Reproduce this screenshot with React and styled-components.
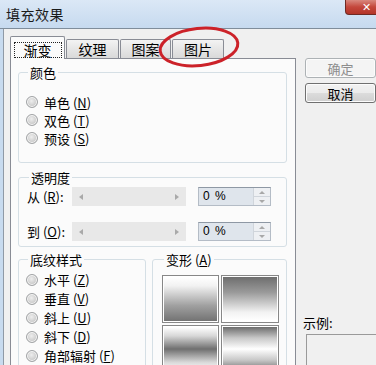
import React from 'react';
import styled, { createGlobalStyle } from 'styled-components';

const GlobalStyle = createGlobalStyle`
	html, body {
		margin: 0;
		padding: 0;
		background: #f0f0f0;
		overflow: hidden;
	}
`;

const Window = styled.div`
	position: relative;
	width: 388px;
	height: 365px;
	overflow: hidden;
	background: #f0f0f0;
	font-family: 'Noto Sans CJK SC', 'Noto Sans', sans-serif;
	font-size: 13px;
	color: #000;
`;

const TitleBar = styled.div`
	height: 28px;
	display: flex;
	align-items: center;
	padding-left: 6px;
	background: linear-gradient(#dbe8f6, #c6daef);
	border-bottom: 1px solid #7f8d9b;
	box-sizing: content-box;

	.title {
		font-size: 14px;
		letter-spacing: 0.5px;
		color: #1b1b1b;
	}
`;

const CloseButton = styled.div`
	margin-left: auto;
	align-self: flex-start;
	width: 43px;
	height: 15px;
	display: flex;
	align-items: center;
	justify-content: center;
	background: linear-gradient(#d9887e, #c4473c 50%, #b33428);
	border: 1px solid #6e2a24;
	border-top: none;
	border-radius: 0 0 4px 4px;
	box-sizing: border-box;
	color: #fff;
	font-family: 'DejaVu Sans', sans-serif;
	font-weight: bold;
	font-size: 11px;
	line-height: 1;
`;

const Body = styled.div`
	display: flex;
	align-items: flex-start;
	height: 336px;
	padding-left: 7px;
	border-left: 3px solid #c8dbef;
	box-shadow: inset 1px 0 #8f9aa6;
`;

const TabArea = styled.div`
	width: 286px;
	margin-top: 7px;
	display: flex;
	flex-direction: column;
`;

const TabRow = styled.div`
	display: flex;
	align-items: flex-end;
	height: 22px;
`;

const Tab = styled.div`
	position: relative;
	width: ${(p) => p.$w}px;
	height: ${(p) => (p.$active ? 23 : 19)}px;
	margin-bottom: ${(p) => (p.$active ? -1 : 0)}px;
	z-index: ${(p) => (p.$active ? 1 : 0)};
	box-sizing: border-box;
	border: 1px solid #898c95;
	border-bottom: none;
	border-radius: 2px 2px 0 0;
	background: ${(p) => (p.$active ? '#fbfbfb' : 'linear-gradient(#f3f3f3, #e6e6e6 50%, #d9d9d9)')};
	display: flex;
	align-items: center;
	justify-content: center;
	padding-top: ${(p) => (p.$active ? 3 : 0)}px;
	font-size: 14px;
	line-height: 16px;

	& + & {
		margin-left: 1px;
	}
`;

const Focus = styled.span`
	border: 1px dotted #222;
	padding: 0 9px;
	line-height: 14px;
`;

const Panel = styled.div`
	height: 320px;
	box-sizing: border-box;
	border: 1px solid #898c95;
	background: #fbfbfb;
	padding: 0 8px 0 7px;
	overflow: hidden;
`;

const Group = styled.fieldset`
	margin: ${(p) => p.$top}px 0 0;
	padding: ${(p) => p.$pad};
	width: ${(p) => (p.$w ? `${p.$w}px` : 'auto')};
	box-sizing: border-box;
	border: 1px solid #d5dfe5;
	border-radius: 3px;
	min-width: 0;

	legend {
		padding: 0 2px;
		margin-left: 2px;
		font-size: 13px;
		line-height: 15px;
	}
`;

const RadioRow = styled.div`
	display: flex;
	align-items: center;
	height: ${(p) => p.$h}px;
	gap: 6px;
	white-space: nowrap;

	u {
		text-underline-offset: 1px;
	}
`;

const Radio = styled.span`
	flex: none;
	width: 12px;
	height: 12px;
	box-sizing: border-box;
	border-radius: 50%;
	border: 1px solid #a2a4a6;
	background: radial-gradient(circle at 45% 40%, #eeeeee, #cfcfcf 55%, #b9b9b9);
	box-shadow: inset 0 0 0 1px #f7f7f7;
`;

const SliderRow = styled.div`
	display: flex;
	align-items: center;
	height: 19px;

	& + & {
		margin-top: 16px;
	}

	.label {
		width: 45px;
		white-space: nowrap;
	}
`;

const Slider = styled.div`
	width: 114px;
	height: 19px;
	background: #e8e8e8;
	display: flex;
	align-items: center;
	justify-content: space-between;
	padding: 0 7px;
	box-sizing: border-box;
`;

const Arrow = styled.span`
	width: 0;
	height: 0;
	border-top: 3px solid transparent;
	border-bottom: 3px solid transparent;
	${(p) => (p.$dir === 'left' ? 'border-right: 4px solid #a9a9a9;' : 'border-left: 4px solid #a9a9a9;')}
`;

const Spin = styled.div`
	margin-left: 12px;
	width: 73px;
	height: 19px;
	box-sizing: border-box;
	border: 1px solid #b4bcc6;
	border-top-color: #8e98a4;
	display: flex;
	background: #dfe5ec;

	.value {
		flex: 1;
		padding-left: 4px;
		font-family: 'Liberation Sans', sans-serif;
		font-size: 12px;
		line-height: 17px;
		letter-spacing: 1px;
	}
`;

const SpinButtons = styled.div`
	width: 16px;
	display: flex;
	flex-direction: column;
	background: #eef0f3;
	border-left: 1px solid #d0d5db;

	span {
		flex: 1;
		display: flex;
		align-items: center;
		justify-content: center;
	}

	span + span {
		border-top: 1px solid #d0d5db;
	}
`;

const SpinArrow = styled.i`
	width: 0;
	height: 0;
	border-left: 3px solid transparent;
	border-right: 3px solid transparent;
	${(p) => (p.$up ? 'border-bottom: 3px solid #a8a8a8;' : 'border-top: 3px solid #a8a8a8;')}
`;

const BottomRow = styled.div`
	display: flex;
	gap: 6px;
	align-items: flex-start;
`;

const SwatchGrid = styled.div`
	display: grid;
	grid-template-columns: 57px 58px;
	grid-auto-rows: 48px;
	gap: 2px;
`;

const Swatch = styled.div`
	box-sizing: border-box;
	border: 1px solid #878787;
	padding: 1px;
	background: #fff;

	&::after {
		content: '';
		display: block;
		height: 100%;
		background: ${(p) => p.$bg};
	}
`;

const Side = styled.div`
	margin-left: 9px;
	padding-top: 29px;
	display: flex;
	flex-direction: column;
	align-items: flex-start;
`;

const Button = styled.div`
	width: 71px;
	height: 20px;
	box-sizing: border-box;
	border-radius: 3px;
	display: flex;
	align-items: center;
	justify-content: center;
	font-size: 13px;
	border: 1px solid ${(p) => (p.$disabled ? '#adb2b5' : '#707070')};
	color: ${(p) => (p.$disabled ? '#8d8d8d' : '#000')};
	background: ${(p) => (p.$disabled ? '#f4f4f4' : 'linear-gradient(#f2f2f2, #ebebeb 50%, #dcdcdc 51%, #cfcfcf)')};
	box-shadow: inset 0 0 0 1px #fcfcfc;

	& + & {
		margin-top: 5px;
	}
`;

const SampleLabel = styled.div`
	margin-top: 212px;
	margin-left: -2px;
	line-height: 15px;
`;

const SampleBox = styled.div`
	margin-top: 4px;
	margin-left: 1px;
	width: 69px;
	height: 40px;
	border: 1px solid #9a9a9a;
	background: #f0f0f0;
`;

const Annotation = styled.svg`
	position: absolute;
	left: 150px;
	top: 20px;
	width: 100px;
	height: 56px;
	pointer-events: none;
`;

const colorOptions = [
	['单色', 'N'],
	['双色', 'T'],
	['预设', 'S'],
];

const shadingOptions = [
	['水平', 'Z'],
	['垂直', 'V'],
	['斜上', 'U'],
	['斜下', 'D'],
	['角部辐射', 'F'],
];

const swatches = [
	'linear-gradient(#ffffff, #f2f2f2 20%, #a0a0a0 65%, #737373)',
	'linear-gradient(#6e6e6e, #9a9a9a 35%, #f2f2f2 80%, #ffffff)',
	'linear-gradient(#ffffff, #d8d8d8 20%, #6f6f6f 50%, #d8d8d8 80%, #ffffff)',
	'linear-gradient(#6c6c6c, #c8c8c8 25%, #ffffff 50%, #c8c8c8 75%, #6c6c6c)',
];

function Option({ text, hotkey, h }) {
	return (
		<RadioRow $h={h}>
			<Radio />
			<span>
				{text} (<u>{hotkey}</u>)
			</span>
		</RadioRow>
	);
}

function TransparencyRow({ label, hotkey }) {
	return (
		<SliderRow>
			<span className='label'>
				{label} (<u>{hotkey}</u>):
			</span>
			<Slider>
				<Arrow $dir='left' />
				<Arrow $dir='right' />
			</Slider>
			<Spin>
				<span className='value'>0 %</span>
				<SpinButtons>
					<span>
						<SpinArrow $up />
					</span>
					<span>
						<SpinArrow />
					</span>
				</SpinButtons>
			</Spin>
		</SliderRow>
	);
}

export default function App() {
	return (
		<Window>
			<GlobalStyle />
			<TitleBar>
				<span className='title'>填充效果</span>
				<CloseButton>✕</CloseButton>
			</TitleBar>
			<Body>
				<TabArea>
					<TabRow>
						<Tab $active $w={55}>
							<Focus>渐变</Focus>
						</Tab>
						<Tab $w={53}>纹理</Tab>
						<Tab $w={51}>图案</Tab>
						<Tab $w={52}>图片</Tab>
					</TabRow>
					<Panel>
						<Group $top={6} $pad='13px 7px 15px'>
							<legend>颜色</legend>
							{colorOptions.map(([t, k]) => (
								<Option key={k} text={t} hotkey={k} h={18} />
							))}
						</Group>
						<Group $top={7} $pad='2px 8px 5px'>
							<legend>透明度</legend>
							<TransparencyRow label='从' hotkey='R' />
							<TransparencyRow label='到' hotkey='O' />
						</Group>
						<BottomRow>
							<Group $top={5} $w={128} $pad='3px 7px 20px'>
								<legend>底纹样式</legend>
								{shadingOptions.map(([t, k]) => (
									<Option key={k} text={t} hotkey={k} h={19} />
								))}
							</Group>
							<Group $top={5} $w={135} $pad='8px 9px 20px'>
								<legend>变形 (<u>A</u>)</legend>
								<SwatchGrid>
									{swatches.map((bg, i) => (
										<Swatch key={i} $bg={bg} />
									))}
								</SwatchGrid>
							</Group>
						</BottomRow>
					</Panel>
				</TabArea>
				<Side>
					<Button $disabled>确定</Button>
					<Button>取消</Button>
					<SampleLabel>示例:</SampleLabel>
					<SampleBox />
				</Side>
			</Body>
			<Annotation viewBox='0 0 100 56'>
				<ellipse
					cx='49'
					cy='27'
					rx='39'
					ry='18.5'
					transform='rotate(-6 49 27)'
					fill='none'
					stroke='#cc2229'
					strokeWidth='3'
				/>
			</Annotation>
		</Window>
	);
}
